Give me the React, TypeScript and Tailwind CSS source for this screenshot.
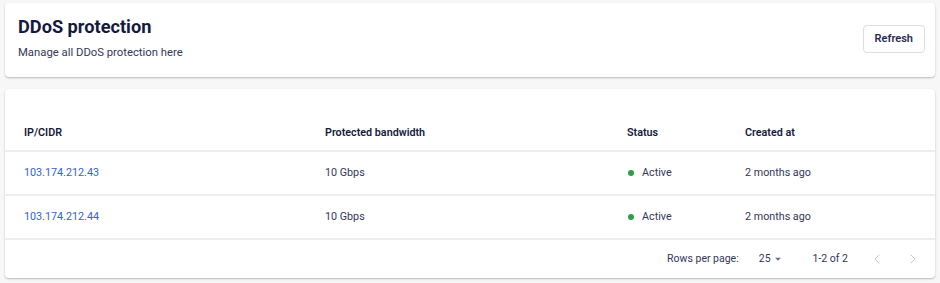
import React from 'react';
import { ChevronLeft, ChevronRight } from 'lucide-react';

const rows = [
  { ip: '103.174.212.43', bandwidth: '10 Gbps', status: 'Active', created: '2 months ago' },
  { ip: '103.174.212.44', bandwidth: '10 Gbps', status: 'Active', created: '2 months ago' },
];

const App = () => {
  return (
    <div className="min-h-[283px] bg-[#f7f7f8] pl-[5px] pr-[5px] pt-[3px] font-['Roboto',sans-serif] text-[#1d2041]">
      {/* Header card */}
      <div className="flex h-[74px] items-start justify-between rounded-[4px] bg-white pl-[13px] pr-[10px] shadow-[0_1px_2px_rgba(0,0,0,0.25)]">
        <div className="pt-[11px]">
          <h1 className="text-[18.2px] font-bold leading-[26px] text-[#141a3d]">DDoS protection</h1>
          <p className="mt-[5px] text-[11.3px] leading-[16px] text-[#33375a]">Manage all DDoS protection here</p>
        </div>
        <button className="mt-[22px] h-[28px] rounded-[4px] border border-[#dcdde3] bg-white px-[11px] text-[11px] font-semibold text-[#262a4d]">
          Refresh
        </button>
      </div>

      {/* Table card */}
      <div className="mt-[12px] rounded-[4px] bg-white shadow-[0_1px_2px_rgba(0,0,0,0.25)]">
        <div className="h-[27px]" />
        <table className="w-full table-fixed border-collapse text-[10.75px]">
          <thead>
            <tr className="h-[35px] border-b-2 border-[#eeeef0]">
              <th className="w-[320px] pl-[19px] text-left font-semibold text-[#141a3d]">IP/CIDR</th>
              <th className="w-[302px] text-left font-semibold text-[#141a3d]">Protected bandwidth</th>
              <th className="w-[118px] text-left font-semibold text-[#141a3d]">Status</th>
              <th className="text-left font-semibold text-[#141a3d]">Created at</th>
            </tr>
          </thead>
          <tbody>
            {rows.map((row) => (
              <tr key={row.ip} className="h-[44px] border-b-2 border-[#eeeef0]">
                <td className="pl-[19px] text-[#2f63d6]">{row.ip}</td>
                <td className="text-[#33375a]">{row.bandwidth}</td>
                <td className="text-[#33375a]">
                  <span className="flex items-center gap-[8px]">
                    <span className="ml-[1px] h-[6px] w-[6px] rounded-full bg-[#2e9e4a]" />
                    {row.status}
                  </span>
                </td>
                <td className="text-[#33375a]">{row.created}</td>
              </tr>
            ))}
          </tbody>
        </table>
        <div className="flex h-[38px] items-center justify-end pr-[14px] text-[10.5px] text-[#33375a]">
          <span>Rows per page:</span>
          <span className="ml-[20px] flex items-center">
            25
            <svg width="14" height="14" viewBox="0 0 24 24" className="fill-[#6b6e84]">
              <path d="M7 10l5 5 5-5z" />
            </svg>
          </span>
          <span className="ml-[28px]">1-2 of 2</span>
          <ChevronLeft className="ml-[21px] h-[16px] w-[16px] text-[#c3c4cc]" strokeWidth={1.5} />
          <ChevronRight className="ml-[20px] h-[16px] w-[16px] text-[#c3c4cc]" strokeWidth={1.5} />
        </div>
      </div>
    </div>
  );
};

export default App;
